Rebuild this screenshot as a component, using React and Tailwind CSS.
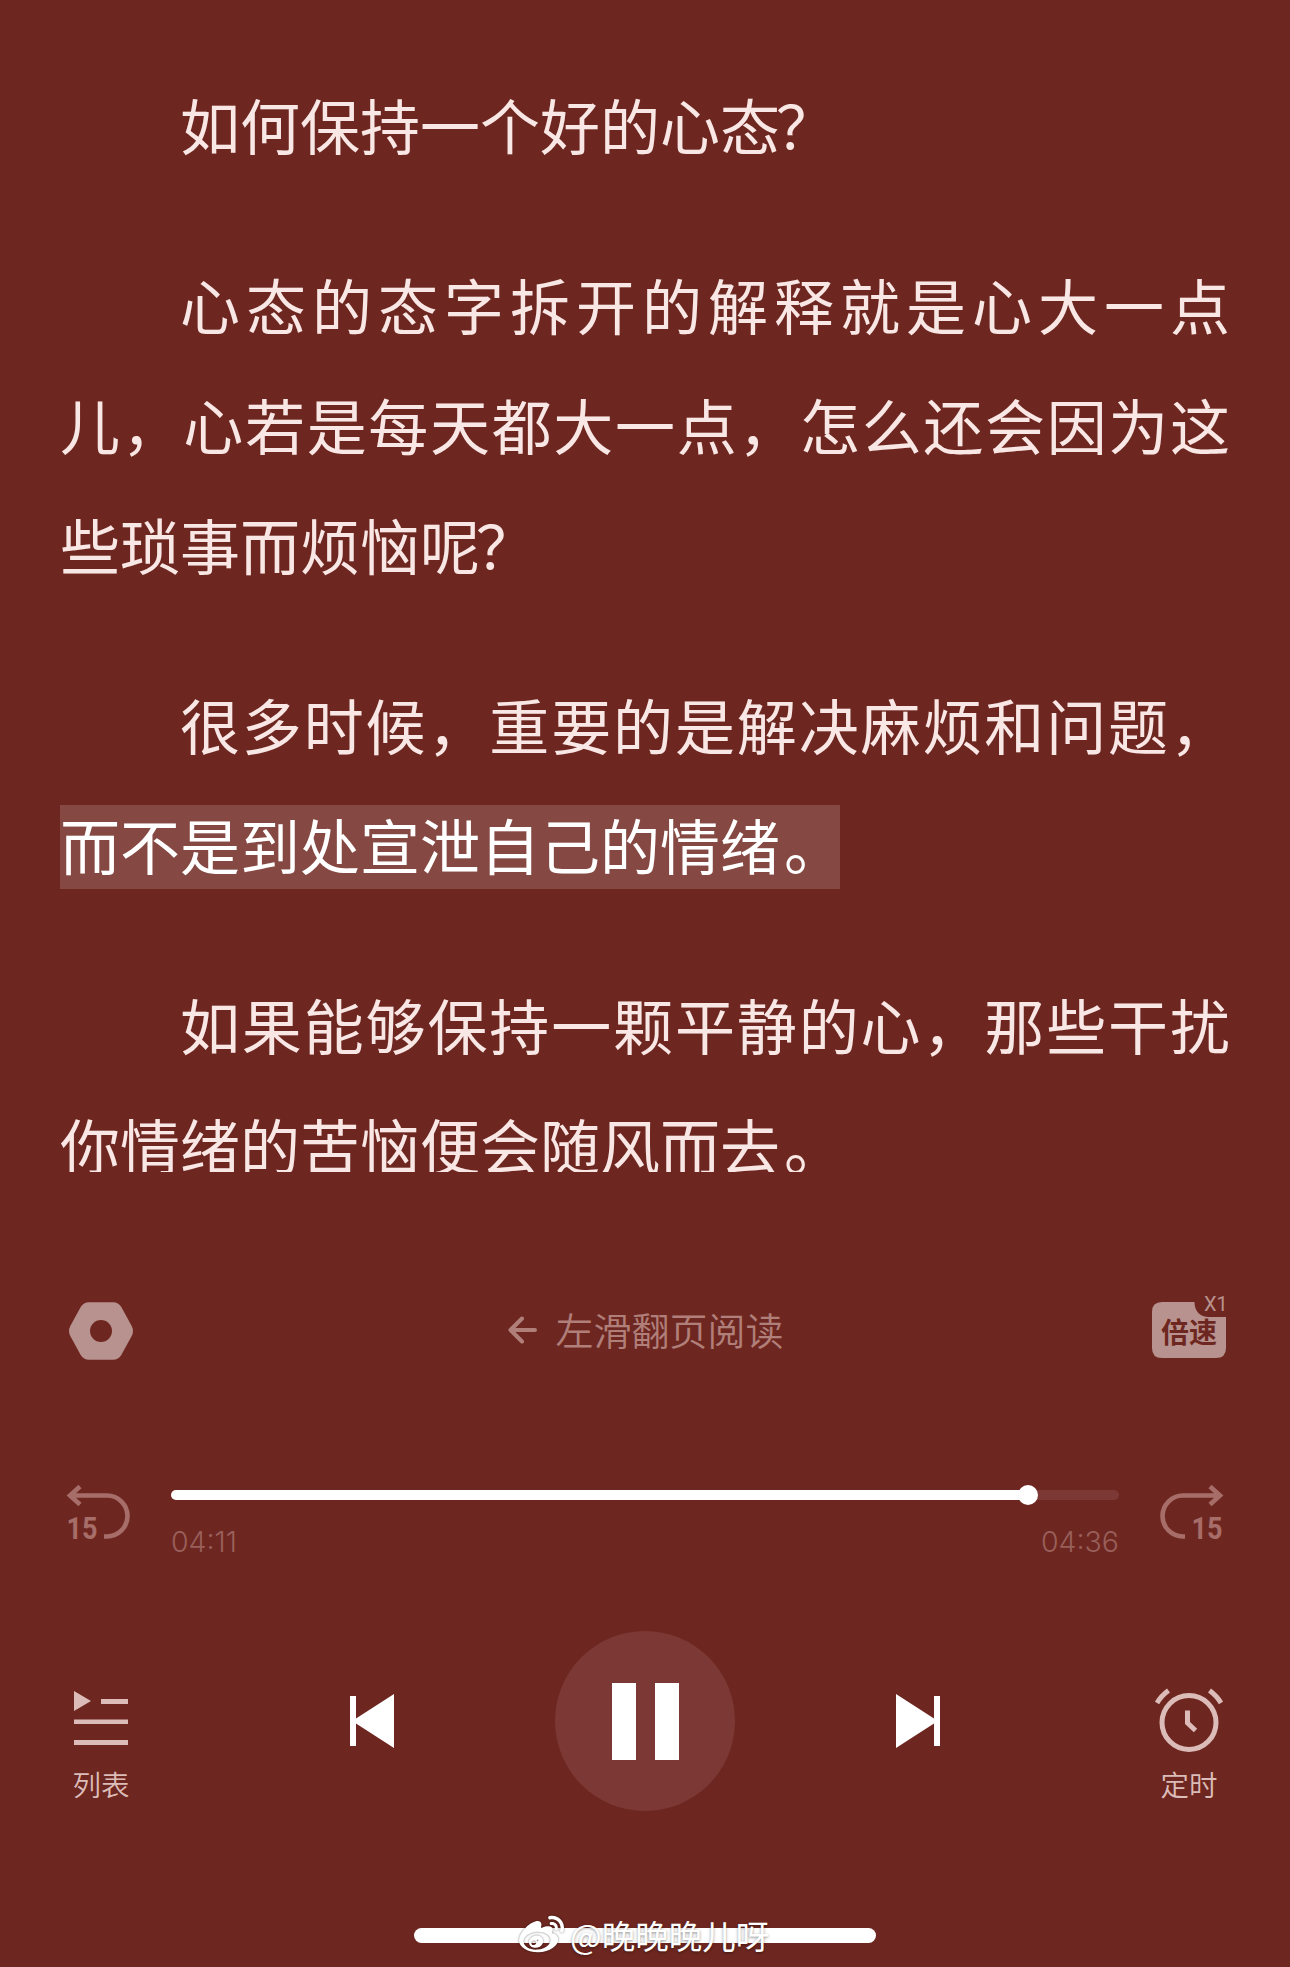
import { FaWeibo } from 'react-icons/fa';

const current = 4 * 60 + 11;
const duration = 4 * 60 + 36;

function SettingsIcon() {
  return (
    <svg width="66" height="60" viewBox="0 0 66 60" className="relative top-px text-[#b8928e]">
      <path
        fillRule="evenodd"
        fill="currentColor"
        d="M21 1.200H45Q50.500 1.200 53.300 6L63.700 25Q66.200 30 63.700 35L53.300 54Q50.500 58.800 45 58.800H21Q15.500 58.800 12.700 54L2.300 35Q-.2 30 2.300 25L12.700 6Q15.500 1.200 21 1.200ZM33 19a11 11 0 1 0 0 22a11 11 0 1 0 0-22Z"
      />
    </svg>
  );
}

function SpeedButton() {
  return (
    <button type="button" className="relative h-[56px] w-[74px]">
      <svg width="74" height="56" viewBox="0 0 74 56" className="block">
        <path
          fill="#b8928e"
          d="M10 0H42.500C42.500 9 48 15 57 15H74V46Q74 56 64 56H10Q0 56 0 46V10Q0 0 10 0Z"
        />
      </svg>
      <span className="absolute left-[9px] top-[15px] text-[28px] font-bold leading-[28px] text-[#6e2720]">倍速</span>
      <span className="absolute left-[52px] top-[-6px] font-['Roboto'] text-[20px] font-normal leading-[16px] text-[#b8928e]">X1</span>
    </button>
  );
}

function BackIcon() {
  return (
    <svg width="64" height="58" viewBox="0 0 64 58" className="overflow-visible text-[#a76d69]">
      <path fill="none" stroke="currentColor" strokeWidth="4.600" d="M3 11.500H41A20.500 20.500 0 0 1 41 52.500H38M14 2.500L4 11.500L14 20.500" />
      <text x="0.500" y="55" fill="currentColor" textLength="31" lengthAdjust="spacingAndGlyphs" className="font-['Roboto'] text-[31px] font-bold">
        15
      </text>
    </svg>
  );
}

function ForwardIcon() {
  return (
    <svg width="64" height="58" viewBox="0 0 64 58" className="overflow-visible text-[#a76d69]">
      <path fill="none" stroke="currentColor" strokeWidth="4.600" d="M61 11.500H23A20.500 20.500 0 0 0 23 52.500H25M50 2.500L60 11.500L50 20.500" />
      <text x="31.500" y="55" fill="currentColor" textLength="31" lengthAdjust="spacingAndGlyphs" className="font-['Roboto'] text-[31px] font-bold">
        15
      </text>
    </svg>
  );
}

function ListIcon() {
  return (
    <svg width="54" height="56" viewBox="0 0 54 56" fill="currentColor">
      <path d="M0 0L17 10L0 20ZM27 8H54V13H27ZM0 28.500H54V33H0ZM0 49H54V54H0Z" />
    </svg>
  );
}

function TimerIcon() {
  return (
    <svg width="68" height="66" viewBox="0 0 68 66" fill="none" stroke="currentColor" strokeWidth="5">
      <circle cx="34" cy="36.500" r="27" />
      <path d="M32.500 24.500V37L40.500 44.500M2 17Q6 10 13.500 4.500M66 17Q62 10 54.500 4.500" />
    </svg>
  );
}

function Reader() {
  return (
    <article className="h-[1172px] space-y-[60px] overflow-hidden px-[60px] pt-[64px] text-justify text-[60px] font-normal leading-[120px] text-[#f9e7e5]">
      <p className="indent-[120px]">
        如何保持一个好的心态<span className="relative -left-[4px]">？</span>
      </p>
      <p className="indent-[120px]">
        心态的态字拆开的解释就是心大一点儿，心若是每天都大一点，怎么还会因为这些琐事而烦恼呢<span className="relative -left-[4px]">？</span>
      </p>
      <p className="h-[240px] indent-[120px]">
        很多时候，重要的是解决麻烦和问题，
        <span className="inline-block bg-[#854842] pb-[7px] indent-0 leading-[77px] text-white">
          而不是到处宣泄自己的情绪<span className="relative left-[4px]">。</span>
        </span>
      </p>
      <p className="indent-[120px]">
        如果能够保持一颗平静的心，那些干扰你情绪的苦恼便会随风而去<span className="relative left-[4px]">。</span>
      </p>
    </article>
  );
}

function Toolbar() {
  return (
    <div className="mt-[118px] flex h-[80px] items-center justify-between pl-[68px] pr-[64px]">
      <SettingsIcon />
      <div className="ml-[6px] flex items-center gap-[18px] text-[38px] leading-none text-[#b07f7a]">
        <svg width="29" height="28" viewBox="0 0 29 28" fill="none" stroke="currentColor" strokeWidth="4" strokeLinecap="round" strokeLinejoin="round">
          <path d="M27 14H2.500M14 2.500L2.500 14L14 25.500" />
        </svg>
        <span className="mb-[2px]">左滑翻页阅读</span>
      </div>
      <SpeedButton />
    </div>
  );
}

function Progress() {
  const percent = (current / duration) * 100 - 0.5;

  return (
    <div className="mt-[104px] flex items-start justify-between px-[66px]">
      <button type="button" className="mt-[10px]">
        <BackIcon />
      </button>
      <div className="w-[948px]">
        <div className="relative mt-[16px] h-[10px] rounded-full bg-[#7b3834]">
          <div className="h-full rounded-full bg-white" style={{ width: `${percent}%` }} />
          <div className="absolute -top-[5px] size-5 -translate-x-1/2 rounded-full bg-white" style={{ left: `${percent}%` }} />
        </div>
        <div className="mt-[24px] flex justify-between font-['Inter'] text-[28.500px] font-light leading-[36px] text-[#985f5b]">
          <span>04:11</span>
          <span>04:36</span>
        </div>
      </div>
      <button type="button" className="mt-[10px]">
        <ForwardIcon />
      </button>
    </div>
  );
}

function Controls() {
  return (
    <div className="mt-[71px] flex h-[180px] items-center justify-between px-[67px] text-[#dcbcb9]">
      <button type="button" className="flex w-[68px] flex-col items-center pt-[48px]">
        <div className="flex h-[66px] items-center">
          <ListIcon />
        </div>
        <span className="mt-[12px] text-[28.500px] leading-[40px]">列表</span>
      </button>
      <div className="flex items-center gap-[161px] text-white">
        <button type="button">
          <svg width="44" height="54" viewBox="0 0 44 54" fill="currentColor">
            <path d="M0 2H6V24.500L44 0V54L6 29.500V52H0Z" />
          </svg>
        </button>
        <button type="button" className="flex size-[180px] items-center justify-center gap-[19px] rounded-full bg-[#7b3834]">
          <span className="h-[77px] w-[24px] bg-white" />
          <span className="h-[77px] w-[24px] bg-white" />
        </button>
        <button type="button">
          <svg width="44" height="54" viewBox="0 0 44 54" fill="currentColor">
            <path d="M44 2H38V24.500L0 0V54L38 29.500V52H44Z" />
          </svg>
        </button>
      </div>
      <button type="button" className="flex w-[68px] flex-col items-center pt-[48px]">
        <TimerIcon />
        <span className="mt-[12px] text-[28.500px] leading-[40px]">定时</span>
      </button>
    </div>
  );
}

function App() {
  return (
    <main className="h-[1967px] w-[1290px] overflow-hidden bg-[#6e2720] font-['Noto_Sans_CJK_SC',sans-serif] font-[350]">
      <Reader />
      <Toolbar />
      <Progress />
      <Controls />
      <div className="relative mx-auto mt-[117px] h-[15px] w-[462px] rounded-full bg-white">
        <div className="absolute left-[105px] top-[-18px] flex items-center gap-[6px] whitespace-nowrap text-[33.500px] font-normal leading-[50px] text-white [text-shadow:0_1px_3px_rgba(0,0,0,0.45)]">
          <FaWeibo className="size-[45px] drop-shadow-[0_0_1px_rgba(0,0,0,0.5)]" />
          <span>@晚晚晚儿呀</span>
        </div>
      </div>
    </main>
  );
}

export default App;
